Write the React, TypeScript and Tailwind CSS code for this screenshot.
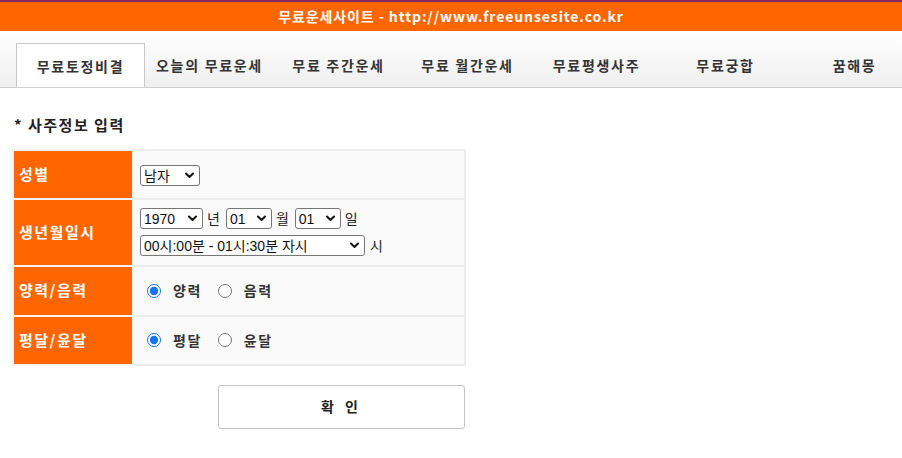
import { useState } from "react";

const tabs = [
  "무료토정비결",
  "오늘의 무료운세",
  "무료 주간운세",
  "무료 월간운세",
  "무료평생사주",
  "무료궁합",
  "꿈해몽",
];

const kr = "font-['Noto_Sans_CJK_KR','Noto_Sans',sans-serif]";

function Select({ value, width }: { value: string; width: string }) {
  return (
    <div className={`relative inline-flex items-center ${width}`}>
      <select
        defaultValue={value}
        className="appearance-none w-full h-[21px] border border-[#767676] rounded-[3px] bg-white text-[14px] text-[#111] pl-[3px] pr-[18px] leading-none font-['Liberation_Sans','Noto_Sans_CJK_KR',sans-serif]"
      >
        <option>{value}</option>
      </select>
      <svg
        className="absolute right-[6px] top-[7px] pointer-events-none"
        width="9"
        height="7"
        viewBox="0 0 9 7"
      >
        <path d="M1 1.5 L4.5 5 L8 1.5" fill="none" stroke="#111" strokeWidth="2" strokeLinecap="round" strokeLinejoin="round" />
      </svg>
    </div>
  );
}

function LabelCell({ children }: { children: React.ReactNode }) {
  return (
    <td className="w-[120px] bg-[#ff6600] border-2 border-[#f3f3f3] pl-[5px] text-white font-bold text-[15px] tracking-[1.5px] align-middle">
      {children}
    </td>
  );
}

function RadioGroup({
  name,
  options,
  value,
  onChange,
}: {
  name: string;
  options: string[];
  value: string;
  onChange: (v: string) => void;
}) {
  return (
    <div className="flex items-center text-[14px] font-bold text-[#333] tracking-[1.5px]">
      {options.map((v) => (
        <label key={v} className="flex items-center mr-[16px]">
          <input
            type="radio"
            name={name}
            checked={value === v}
            onChange={() => onChange(v)}
            className="w-[14px] h-[14px] m-0 mr-[12px] accent-[#1a73e8]"
          />
          {v}
        </label>
      ))}
    </div>
  );
}

export default function App() {
  const [solar, setSolar] = useState("양력");
  const [leap, setLeap] = useState("평달");

  return (
    <div className={`w-[902px] h-[458px] bg-white overflow-hidden ${kr}`}>
      {/* top banner */}
      <div className="border-t-2 border-[#8c2a63] bg-[#ff6600] h-[31px] flex items-center justify-center text-white font-bold text-[14px] tracking-[0.9px]">
        무료운세사이트 - http://www.freeunsesite.co.kr
      </div>

      {/* tabs */}
      <div className="h-[57px] bg-gradient-to-b from-white to-[#efefef] border-b border-[#cfcfcf] flex items-end pl-[16px] overflow-hidden">
        {tabs.map((t, i) => (
          <div
            key={t}
            className={`shrink-0 w-[129px] h-[44px] flex items-center justify-center text-[14px] font-bold text-[#333] tracking-[1.7px] ${
              i === 0 ? "bg-white border border-b-0 border-[#c8c8c8] -mb-px h-[45px]" : ""
            }`}
          >
            {t}
          </div>
        ))}
      </div>

      <div className="pl-[12px] pt-[26px]">
        <div className="pl-[2px] text-[15px] font-bold text-[#222] tracking-[1.5px]">* 사주정보 입력</div>

        <table className="mt-[12px] w-[454px] border-collapse border-2 border-[#ececec]">
          <tbody>
            <tr className="h-[49px]">
              <LabelCell>성별</LabelCell>
              <td className="bg-[#fafafa] border-2 border-[#ececec] pl-[6px]">
                <Select value="남자" width="w-[60px]" />
              </td>
            </tr>
            <tr className="h-[67px]">
              <LabelCell>생년월일시</LabelCell>
              <td className="bg-[#fafafa] border-2 border-[#ececec] pl-[6px] text-[14px] text-[#222]">
                <div className="flex items-center gap-[4px]">
                  <Select value="1970" width="w-[63px]" />
                  <span className="mr-[2px]">년</span>
                  <Select value="01" width="w-[46px]" />
                  <span className="mr-[2px]">월</span>
                  <Select value="01" width="w-[46px]" />
                  <span>일</span>
                </div>
                <div className="flex items-center gap-[5px] mt-[6px]">
                  <Select value="00시:00분 - 01시:30분 자시" width="w-[225px]" />
                  <span>시</span>
                </div>
              </td>
            </tr>
            <tr className="h-[50px]">
              <LabelCell>양력/음력</LabelCell>
              <td className="bg-[#fafafa] border-2 border-[#ececec] pl-[13px]">
                <RadioGroup name="solar" options={["양력", "음력"]} value={solar} onChange={setSolar} />
              </td>
            </tr>
            <tr className="h-[49px]">
              <LabelCell>평달/윤달</LabelCell>
              <td className="bg-[#fafafa] border-2 border-[#ececec] pl-[13px]">
                <RadioGroup name="leap" options={["평달", "윤달"]} value={leap} onChange={setLeap} />
              </td>
            </tr>
          </tbody>
        </table>

        <button className="ml-[206px] mt-[19px] w-[247px] h-[44px] border border-[#c4c4c4] rounded-[3px] bg-white text-[14px] font-bold text-[#222] tracking-[4px]">
          확 인
        </button>
      </div>
    </div>
  );
}
